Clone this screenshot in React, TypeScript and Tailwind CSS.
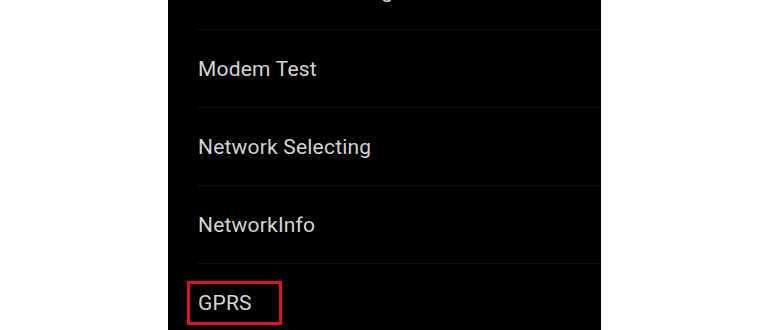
import React from 'react';

const items = ['Network Info Setting', 'Modem Test', 'Network Selecting', 'NetworkInfo'];

const Row = ({ children }: { children: React.ReactNode }) => (
  <>
    <div className="h-[77px] flex items-center pl-[30px] pt-[3px] text-[21px] text-[#d4d4d4] tracking-[0.2px]">
      {children}
    </div>
    <div className="ml-[29px] h-px bg-[#101010]" />
  </>
);

const App = () => {
  return (
    <div className="w-[770px] h-[330px] bg-white overflow-hidden" style={{ fontFamily: 'Roboto, "Noto Sans", sans-serif' }}>
      <div className="ml-[168px] w-[433px] h-[330px] bg-black overflow-hidden">
        <div className="-mt-[48px]">
          {items.map((label) => (
            <Row key={label}>{label}</Row>
          ))}
          <div className="h-[77px] flex items-center pl-[19px] pt-[1px] text-[21px] text-[#d4d4d4] tracking-[0.2px]">
            <span className="w-[95px] h-[44px] flex items-center pl-2 pt-[2px] border-[3px] border-[#e0141e]">GPRS</span>
          </div>
        </div>
      </div>
    </div>
  );
};

export default App;
